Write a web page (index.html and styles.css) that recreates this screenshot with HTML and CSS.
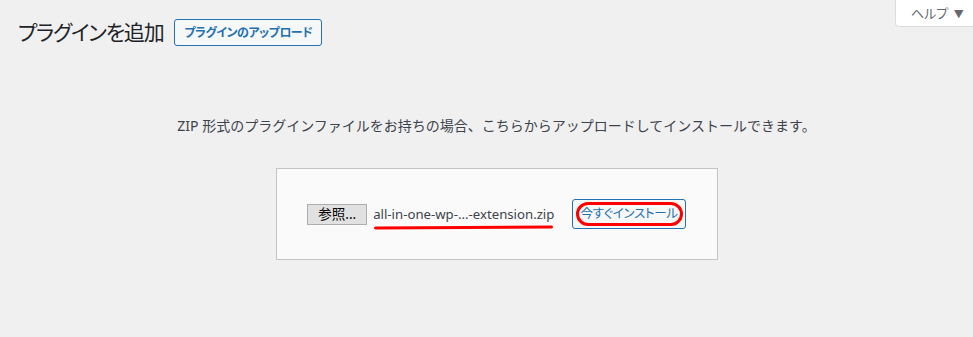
FILE: index.html
```html
<!DOCTYPE html>
<html lang="ja">
<head>
    <meta charset="utf-8">
    <title>プラグインを追加</title>
    <link rel="stylesheet" href="styles.css">
</head>
<body>

    <div class="help-tab">ヘルプ <span class="arrow">▼</span></div>

    <div class="wrap">
        <div class="head">
            <h1>プラグインを追加</h1>
            <a class="upload-toggle">プラグインのアップロード</a>
        </div>

        <p class="install-help">ZIP 形式のプラグインファイルをお持ちの場合、こちらからアップロードしてインストールできます。</p>

        <div class="upload-form">
            <span class="browse">参照...</span>
            <span class="file-name">all-in-one-wp-...-extension.zip</span>
            <span class="install-btn"><span class="circled">今すぐインストール</span></span>
        </div>
    </div>

</body>
</html>
```

FILE: styles.css
```css
*{box-sizing:border-box;  margin:0;  }
body{background:#f0f0f1;  color:#3c434a;  font-family:'Noto Sans','Noto Sans CJK JP',sans-serif;  font-size:13px;  }

.help-tab{position:absolute;  top:0;  right:0;  width:78px;  height:27px;  padding:4px 0 0 15px;  background:#fff;  border:1px solid #dcdcde;  border-top:none;  border-right:none;  border-radius:0 0 0 4px;  color:#646970;  font-size:13px;  line-height:18px;  font-feature-settings:'palt';  }
.help-tab .arrow{font-size:10px;  margin-left:2px;  }

.wrap{padding:0 0 0 20px;  }

.head{display:flex;  align-items:center;  gap:11px;  padding-top:18px;  height:46px;  margin-left:-2px;  }
h1{font-size:21px;  font-weight:400;  line-height:28px;  color:#1d2327;  font-feature-settings:'palt';  letter-spacing:-1.2px;  }
.upload-toggle{display:inline-block;  height:27px;  padding:0 9px;  border:1px solid #2271b1;  border-radius:3px;  background:#f6f7f7;  color:#2271b1;  font-size:12px;  font-weight:700;  line-height:25px;  letter-spacing:-0.5px;  font-feature-settings:'palt';  }

.install-help{margin-top:70px;  text-align:center;  font-size:14px;  line-height:20px;  color:#3c434a;  }

.upload-form{display:flex;  align-items:center;  justify-content:center;  width:442px;  height:92px;  margin:32px auto 0;  background:#fafafa;  border:1px solid #c3c4c7;  }
.browse{height:21px;  padding:0 10px;  background:#e1e1e1;  border:1px solid #adadad;  color:#000;  font-size:13.5px;  line-height:19px;  }
.file-name{position:relative;  margin:0 18px 0 6px;  font-size:13.2px;  line-height:20px;  color:#3c434a;  }
.file-name:after{content:'';  position:absolute;  left:1px;  right:1px;  bottom:-5px;  height:3px;  background:#f00;  border-radius:2px;  transform:rotate(-0.3deg);  }
.install-btn{display:inline-block;  height:30px;  padding:0 7px;  border:1px solid #2271b1;  border-radius:3px;  background:#f6f7f7;  color:#2271b1;  font-size:12.5px;  line-height:28px;  letter-spacing:-0.3px;  font-feature-settings:'palt';  }
.circled{position:relative;  }
.circled:after{content:'';  position:absolute;  left:-4px;  right:-5px;  top:-3px;  bottom:-4px;  border:3px solid #f00;  border-radius:12px;  }
```
